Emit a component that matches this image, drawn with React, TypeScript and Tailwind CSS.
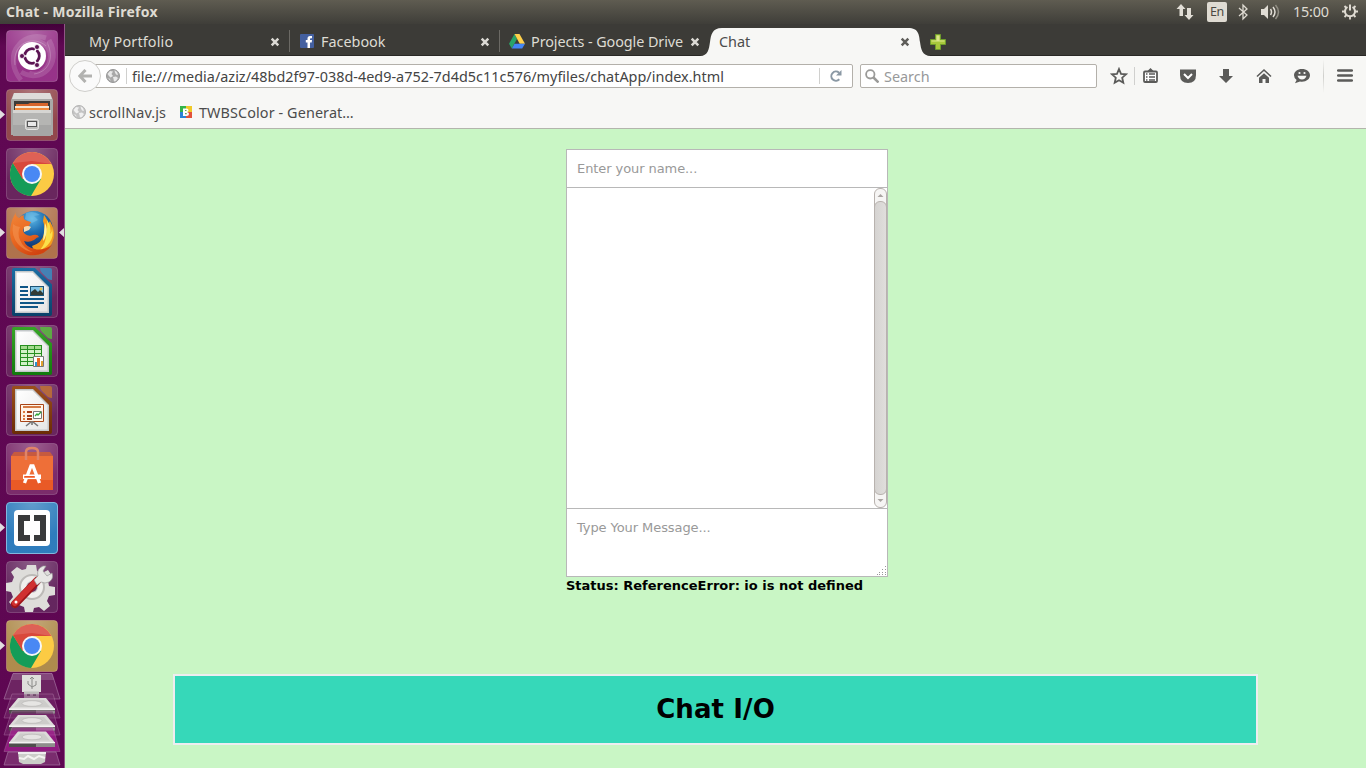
import React from "react";

const ui = "font-['Noto_Sans',sans-serif] whitespace-nowrap";

function Close({ dark = false }: { dark?: boolean }) {
  return (
    <svg width="10" height="10" viewBox="0 0 10 10" className="shrink-0">
      <path d="M1.7 1.7 8.3 8.3M8.3 1.7 1.7 8.3" stroke={dark ? "#5e5d59" : "#dcdad5"} strokeWidth="2.5" />
    </svg>
  );
}

function Globe({ light = false }: { light?: boolean }) {
  return (
    <svg width="14" height="14" viewBox="0 0 14 14" className="shrink-0">
      <circle cx="7" cy="7" r="6.5" fill={light ? "#c4c4c4" : "#a8a8a8"} stroke={light ? "#b4b4b4" : "#969696"} />
      <path d="M1.5 5 4 2l3 .5L5.5 5 7 7l-2.500 1.500L3 7zM8.500 1.200 11 3l1 3-2-.5-1-2zM7 8l3-.5 2 1.500-2 3-2 .5-.5-2.500zM2 9l2 1 .5 2z" fill={light ? "#f0f0f0" : "#e8e8e8"} />
    </svg>
  );
}

function Tile({ bg, border = "#ffffff30", children }: { bg: string; border?: string; children: React.ReactNode }) {
  const id = React.useId();
  return (
    <svg width="52" height="52" viewBox="0 0 52 52" className="block">
      <defs>
        <radialGradient id={id} cx=".5" cy="0" r=".75">
          <stop offset="0" stopColor="#fff" stopOpacity=".3" />
          <stop offset="1" stopColor="#fff" stopOpacity=".07" />
        </radialGradient>
      </defs>
      <rect x=".5" y=".5" width="51" height="51" rx="3.500" fill={bg} />
      <rect x=".5" y=".5" width="51" height="51" rx="3.500" fill={`url(#${id})`} stroke={border} />
      {children}
    </svg>
  );
}

function Chrome() {
  return (
    <g>
      <circle cx="26" cy="26" r="22" fill="#fccb44" />
      <path d="M6.900 15A22 22 0 0 0 25 48L35 31 26 26 17 31z" fill="#159c58" />
      <path d="M6.900 15A22 22 0 0 1 45.500 16H26L16.500 31z" fill="#d9483b" />
      <path d="M6.900 15A22 22 0 0 1 45.500 16L26 13z" fill="#fff" opacity=".14" />
      <circle cx="26" cy="26" r="10" fill="#f7f7f7" />
      <circle cx="26" cy="26" r="8" fill="#4988f4" />
    </g>
  );
}

function Doc({ color, dark, corner, children }: { color: string; dark: string; corner: string; children: React.ReactNode }) {
  const id = React.useId();
  return (
    <g>
      <defs>
        <linearGradient id={id} x1="0" y1="0" x2="0" y2="1"><stop offset="0" stopColor={color} /><stop offset="1" stopColor={dark} /></linearGradient>
        <linearGradient id={`${id}p`} x1="0" y1="0" x2="1" y2="1"><stop offset="0" stopColor="#fff" /><stop offset="1" stopColor="#e6e6e6" /></linearGradient>
      </defs>
      <path d="M6 4q0-2 2-2H29L46 18.500V48q0 2-2 2H8q-2 0-2-2z" fill={`url(#${id})`} />
      <path d="M9 5H27L43 21V47H9z" fill="#c4c8ca" />
      <path d="M10.500 6.500H26.500L41.500 21.500V45.500H10.500z" fill={`url(#${id}p)`} />
      <path d="M34 2H44q2 0 2 2V14q-4 0-6-3L36 7q-2-2-2-5z" fill={corner} opacity=".85" />
      {children}
    </g>
  );
}

function LauncherTiles() {
  return (
    <>
      <Tile bg="#8f2480">
        <path d="M8 34C3 10 31 3 42 18 50 29 38 49 23 43M15 50C-4 27 15 0 40 8M43 10C57 35 34 54 15 42" fill="none" stroke="#fff" strokeWidth="5" opacity=".14" />
        <path d="M9 35C6 12 28 5 40 16M41 12C49 29 42 42 28 44" fill="none" stroke="#fff" opacity=".22" />
        <circle cx="26" cy="26" r="14" fill="#fff" />
        <circle cx="26" cy="26" r="7.300" fill="none" stroke="#5b1453" strokeWidth="2.800" />
        <path d="M26 26H12M26 26l7-12M26 26l7 12" stroke="#fff" strokeWidth="1.500" />
        <circle cx="26" cy="26" r="5.300" fill="#fff" />
        <g fill="#5b1453" stroke="#fff" strokeWidth=".8"><circle cx="16" cy="26" r="2.500" /><circle cx="31" cy="17" r="2.500" /><circle cx="31" cy="35" r="2.500" /></g>
      </Tile>
      <Tile bg="#8a3a3f">
        <path d="M8 4H44L47 11V46H5V11z" fill="#a9a9a7" />
        <path d="M8 4H44L46 10H6z" fill="#deddda" />
        <path d="M8 12H44V22H8z" fill="#3d3b38" />
        <path d="M10 15h12l2-1h18v8H10z" fill="#d7652b" />
        <path d="M9 17h34v2H9z" fill="#f6e8d5" /><path d="M9 19h34v3H9z" fill="#f08b3d" />
        <path d="M7 21H45V47H7z" fill="#b5b5b3" /><path d="M7 21H45V24H7z" fill="#d6d5d2" />
        <path d="M7 36H45V47H7z" fill="#9d9d9b" opacity=".6" />
        <rect x="19.500" y="30.500" width="13" height="10" rx="2" fill="#bebebc" stroke="#e8e8e6" />
        <rect x="21.500" y="32.500" width="9" height="5" fill="#e9e9e9" stroke="#555" />
      </Tile>
      <Tile bg="#5e1652"><Chrome /></Tile>
      <Tile bg="#a9683f">
        <defs>
          <radialGradient id="sea" cx=".45" cy=".2" r=".7"><stop offset="0" stopColor="#5fb9e6" /><stop offset=".5" stopColor="#1f6fb2" /><stop offset="1" stopColor="#123c78" /></radialGradient>
          <linearGradient id="fur" x1="0" y1="0" x2=".6" y2="1"><stop offset="0" stopColor="#f0873a" /><stop offset=".5" stopColor="#ea6a22" /><stop offset="1" stopColor="#d24310" /></linearGradient>
        </defs>
        <circle cx="28" cy="23" r="19" fill="url(#sea)" />
        <path d="M20 6q8-3 14 2l-6 1 4 4-6 3-7-4z" fill="#7cc4ea" opacity=".5" />
        <path d="M38 8q4 5 4 9l2-3q7 12 2 22-5 10-16 12l-4-9q10-3 12-12 1-8-1-13z" fill="#f39a1c" />
        <path d="M41 13q5 7 3 14 2-2 2-6 2 8-2 14-4 6-10 8 6-7 6-15 2-8 1-15z" fill="#fbe04a" />
        <path d="M39 16q3 6 1 12-1 4-3 6 1-9 2-18z" fill="#fff3a0" />
        <path d="M9 7q-5 9-5 19 1 17 18 22 16 2 24-10-10 6-17 4-9-2-11-8 5 2 10-1 3-3 5-3-1-3-6-2-4 2-8-1-3-3-1-6l5-2 2-4q-4-1-6-2-2-2-1-5-4 1-5 3-3-1-4-6z" fill="url(#fur)" />
        <path d="M18 20q4-2 7 0l-2 3-5 2z" fill="#f8d9ad" />
        <path d="M7 17q-2 12 5 20 6 7 15 8-10-4-13-12-3-7 0-13-4 0-7-3z" fill="#f39250" opacity=".6" />
      </Tile>
      <Tile bg="#5e1652">
        <Doc color="#1a6da3" dark="#0a4169" corner="#3a8cbf">
          <path d="M14 20h8v2h-8zM14 24h8v2h-8zM14 28h8v2h-8zM14 32h24v2H14zM14 36h24v2H14zM14 40h18v2H14z" fill="#0f5687" />
          <path d="M24 20h14v10H24z" fill="#1c5477" /><path d="M25 21h12v8H25z" fill="#82c5e8" /><path d="M25 29v-3l4-3 3 3 2-2 3 3v2z" fill="#333b35" /><circle cx="35" cy="23" r="1.400" fill="#ecc54c" />
        </Doc>
      </Tile>
      <Tile bg="#5e1652">
        <Doc color="#37a526" dark="#117a0d" corner="#58bd3d">
          <path d="M14 20h22v21H14z" fill="#278f20" />
          <path d="M15 21h6v3h-6zM22 21h6v3h-6zM29 21h6v3h-6z" fill="#a4db8f" />
          <path d="M15 25h6v3h-6zM22 25h6v3h-6zM29 25h6v3h-6zM15 29h6v3h-6zM22 29h6v3h-6zM29 29h6v3h-6zM15 33h6v3h-6zM22 33h6v3h-6zM15 37h6v3h-6zM22 37h6v3h-6z" fill="#d3f1c7" />
          <path d="M27.500 31.500h10v10h-10z" fill="#fff" stroke="#777" /><path d="M29 37h2v4h-2z" fill="#2d95d0" /><path d="M31 33h3v8h-3z" fill="#e66925" /><path d="M35 36h2v5h-2z" fill="#e1a12c" />
        </Doc>
      </Tile>
      <Tile bg="#5e1652">
        <Doc color="#9c4f1c" dark="#6b2c06" corner="#bf7133">
          <path d="M14.500 20.500h23v17h-23z" fill="#fff4e8" stroke="#a94416" /><path d="M17 22h18v2H17z" fill="#d47a45" />
          <path d="M17 27h2v2h-2zM17 31h2v2h-2zM17 34h2v2h-2z" fill="#dd7b3f" /><path d="M21 27h5v2h-5zM21 31h5v2h-5zM21 34h5v2h-5z" fill="#a53f18" />
          <path d="M27.500 27.500h8v7h-8z" fill="#fff" stroke="#777" /><path d="m29 32 2-2 1 1 3-3" fill="none" stroke="#30a637" strokeWidth="1.300" />
          <path d="m20 42 5-4h2l5 4M26 38v3" fill="none" stroke="#777" strokeWidth="1.600" />
        </Doc>
      </Tile>
      <Tile bg="#711c60">
        <path d="M8 9H44L47 13H5z" fill="#c65a3f" />
        <path d="M5 13H47V47H5z" fill="#ee6f38" />
        <path d="M5 37H47V47H5z" fill="#e95a26" />
        <path d="M20 17V9q0-4 6-4t6 4v8" fill="none" stroke="#e08468" strokeWidth="2.500" />
        <path d="M18.500 40 25 23h2l6.500 17" fill="none" stroke="#fff" strokeWidth="3.300" />
        <path d="M17 31.500H35V36H17z" fill="#fff" />
        <rect x="18" y="33" width="11" height="1.800" rx=".9" fill="#ef5a24" />
      </Tile>
      <Tile bg="#1f73b8" border="#82b7df">
        <rect x="8" y="8" width="36" height="36" rx="4" fill="#fff" />
        <path d="M12 13H24V19H18V33H24V39H12zM28 13H40V39H28V33H34V19H28z" fill="#393a3b" />
      </Tile>
      <Tile bg="#591653">
        <path d="m21 4 9 0 1 6 5 2 6-3 4 6-4 5 1 5 6 1v8l-6 1-2 5 3 5-6 5-5-4-5 1-1 4h-8l-1-5-5-2-5 3-5-6 4-5-2-5-5-1v-8l6-1 2-5-3-5 6-5 5 3 4-1z" fill="#deddda" />
        <circle cx="26" cy="26" r="12" fill="#f0efed" stroke="#bcbab7" strokeWidth="2" />
        <circle cx="26" cy="26" r="6" fill="#c9c7c4" />
        <circle cx="26" cy="26" r="5" fill="#6d2a62" />
        <path d="m9 43 22-23" stroke="#9e1418" strokeWidth="8" strokeLinecap="round" />
        <path d="m9 42 22-23" stroke="#d03030" strokeWidth="6" strokeLinecap="round" />
        <path d="m28 19 4-4q-2-7 5-10l3 0-3 5 4 5 5-3q2 6-3 9-4 2-8 0l-4 3z" fill="#e8e7e5" stroke="#999" strokeWidth=".7" />
        <circle cx="10" cy="41" r="1.500" fill="#fff" />
      </Tile>
      <Tile bg="#a98340" border="#ffe1a750"><Chrome /></Tile>
    </>
  );
}

function Drive({ y, tint }: { y: number; tint: string }) {
  return (
    <g transform={`translate(0 ${y})`}>
      <path d="M12-4H53L60 20H4z" fill={tint} opacity=".5" stroke="#d5a7cf" strokeWidth=".6" />
      <path d="M18 0H46L55 11H9z" fill="#dcdbd9" />
      <path d="M20 2H44L50 9H14z" fill="#cdccca" /><ellipse cx="32" cy="5.500" rx="10" ry="2.800" fill="#e6e5e3" stroke="#b5b4b2" strokeWidth=".6" />
      <path d="M9 11H55V15.500H9z" fill="#4f4e4c" /><path d="M9 10.500H55V12H9z" fill="#f3f2f1" /><path d="M36 12.500H55V15.500H36z" fill="#8e8d8b" />
    </g>
  );
}

function Launcher() {
  return (
    <aside className="relative flex w-[65px] shrink-0 flex-col overflow-hidden border-r border-[#915586] bg-gradient-to-b from-[#43003a] via-[#600853] via-[3%] to-[#5e0752] pt-[6px]">
      <div className="flex flex-col gap-[7px] pl-[6px]"><LauncherTiles /></div>
      <svg width="64" height="96" viewBox="0 0 64 96" className="block shrink-0">
        <path d="M13 1.500H52L60 27H4z" fill="#6d2462" stroke="#a573a0" strokeWidth=".7" />
        <path d="M13 1.500H52L54 8H11z" fill="#fff" opacity=".16" />
        <path d="M22 3H41V20H22z" fill="#dededb" /><path d="M24 19.500h15v6.500H24z" fill="#bcbcba" /><path d="M27 22h3v2h-3zM33 22h3v2h-3z" fill="#666" />
        <path d="M32 6v11M28 9v3l4 3 4-2V9M30 7l2-2 2 2" stroke="#8a8a88" fill="none" />
        <Drive y={26} tint="#7a3170" /><Drive y={43} tint="#7a3170" /><Drive y={59.500} tint="#c42fae" />
        <path d="M8 80 4 93H60L56 80z" fill="#7a2c6e" stroke="#a573a0" strokeWidth=".7" />
        <path d="m18 80 28 0-1 10-4 2-18 0-4-2z" fill="#cccdc9" /><path d="m19 86 5 1 4-3 6 3 5-3 6 2" stroke="#f4f4f1" fill="none" strokeWidth="2" />
        <path d="M18 81H46" stroke="#eee" strokeWidth="2" />
      </svg>
      <svg className="absolute inset-0" width="64" height="744" viewBox="0 24 64 744" fill="#e1dde0">
        <path d="M0 110v9l5-4.500zM0 228v9l5-4.500zM64 228v9l-5-4.500zM0 523v9l5-4.500zM0 641v9l5-4.500z" />
      </svg>
    </aside>
  );
}

function TopBar() {
  return (
    <header className="flex h-6 shrink-0 items-center bg-gradient-to-b from-[#5f5c51] to-[#3f3e39] pl-[6px] text-[#dfdbd2]">
      <span className={`${ui} w-[160px] pb-[2px] text-[14px] font-bold tracking-[0.28px]`}>Chat - Mozilla Firefox</span>
      <div className="ml-auto flex w-[190px] items-center">
        <svg width="18" height="18" viewBox="0 0 18 18" fill="#e1ddd5"><path d="M5 1 9.500 6H7V13H3.500V6H.5zM13 17l4.500-5H15V5h-4v7H8.500z" /></svg>
        <span className="ml-[13px] flex h-5 w-5 items-center justify-center rounded-[2px] bg-[#dfdbd2] pt-[1px] font-['Noto_Sans',sans-serif] text-[12.5px] tracking-[-0.3px] text-[#4b4943]">En</span>
        <svg className="ml-[10px]" width="12" height="18" viewBox="0 0 12 18" fill="none" stroke="#dfdbd2" strokeWidth="1.300"><path d="m2 5 8 7-4 4V2l4 4-8 7" /></svg>
        <svg className="ml-[11px]" width="20" height="18" viewBox="0 0 20 18"><path d="M1 6h3l4-4v14l-4-4H1z" fill="#e1ddd5" /><path d="M10.500 6q2 3 0 6M13 4q4 5 0 10" fill="none" stroke="#e1ddd5" strokeWidth="1.500" /><path d="M15.500 2q6 7 0 14" fill="none" stroke="#918e84" strokeWidth="1.500" /></svg>
        <span className={`${ui} ml-[13px] w-[37px] text-[14.4px] tracking-[-0.2px]`}>15:00</span>
        <svg className="ml-[12px]" width="16" height="17" viewBox="0 0 16 17" fill="none" stroke="#dfdbd2"><path d="M5.500 4a5 5 0 1 0 5 0M8 1.500v6" strokeWidth="2" /><path d="M8 13.500v3M3 8.500H0M16 8.500h-3M4.500 12l-2 2M11.500 12l2 2M4.500 5l-2-2M11.500 5l2-2" strokeWidth="1.800" /></svg>
      </div>
    </header>
  );
}

function Tabs() {
  const t = `${ui} pt-[2px] text-[14.4px] text-[#dedbd4]`;
  return (
    <div className="flex h-8 shrink-0 border-b border-[#292825] bg-[#3c3b37]">
      <div className="flex w-[225px] items-center pb-[1px] pl-[24px] pt-[4px]">
        <span className={`${t} tracking-[0.15px]`}>My Portfolio</span>
        <span className="ml-auto mr-[9px] flex pt-[1px]"><Close /></span>
        <i className="h-[22px] w-px bg-[#6b6964]" />
      </div>
      <div className="flex w-[210px] items-center pb-[1px] pl-[10px] pt-[4px]">
        <svg width="14" height="14" viewBox="0 0 14 14"><rect width="14" height="14" rx="1" fill="#4460a0" /><path d="M7.500 14V8.500H5.800V6H7.500V4.500Q7.500 2 10 2h2v2.200h-1.200Q10 4.200 10 5v1h2l-.3 2.500H10V14z" fill="#fff" /></svg>
        <span className={`${t} ml-[7px]`}>Facebook</span>
        <span className="ml-auto mr-[9px] flex pt-[1px]"><Close /></span>
        <i className="h-[22px] w-px bg-[#6b6964]" />
      </div>
      <div className="flex w-[200px] items-center pb-[1px] pl-[9px] pt-[4px]">
        <svg width="16" height="15" viewBox="0 0 16 15"><path d="M5.500 0 0 9.800 2.800 14.500 8 5z" fill="#29a368" /><path d="M5.500 0h5L16 9.800h-5.300z" fill="#ffd04b" /><path d="M5.500 9.800H16L13.200 14.500H2.800z" fill="#4385f5" /></svg>
        <span className={`${t} ml-[6px] tracking-[-0.08px]`}>Projects - Google Drive</span>
        <span className="ml-auto flex pt-[1px]"><Close /></span>
      </div>
      <div className="relative -mb-px flex w-[232px] items-center pb-[1px] pl-[19px] pt-[4px]">
        <svg className="absolute left-0 top-[4px]" width="232" height="28" viewBox="0 0 232 28">
          <path d="M0 28C8 28 9 21 10 14S12 0 22 0H208C219 0 219 7 220 14S222 28 231 28z" fill="#f7f7f5" />
        </svg>
        <span className={`${ui} relative text-[14.4px] text-[#4c4c4c]`}>Chat</span>
        <span className="relative ml-auto mr-[22px] flex"><Close dark /></span>
      </div>
      <svg className="-ml-[2px] mt-[10px]" width="16" height="16" viewBox="0 0 16 16"><path d="M5.500.5h5v5h5v5h-5v5h-5v-5h-5v-5h5z" fill="#a9c83c" stroke="#6f9c2c" /><path d="M6.500 1.500h3v5h5v1H1.500v-1h5z" fill="#dbe58c" /></svg>
    </div>
  );
}

const g = "#5b5b59";

function NavBar() {
  return (
    <div className="flex h-10 shrink-0 items-center bg-[#f7f7f5] pl-[4px]">
      <div className="z-10 flex h-8 w-8 shrink-0 items-center justify-center rounded-full border border-[#cfcecb] bg-[#fafafa]">
        <svg width="14" height="14" viewBox="0 0 14 14"><path d="M7.500 1 1.800 7l5.700 6M2 7H14" fill="none" stroke="#b2b2b0" strokeWidth="3" /></svg>
      </div>
      <div className="-ml-[9px] flex h-6 w-[761px] items-center rounded-[2px] border border-[#b3b0aa] bg-white pl-[13px]">
        <Globe />
        <i className="ml-[6px] h-4 w-px bg-[#d0d0ce]" />
        <span className={`${ui} ml-[5px] w-[687px] pt-[2px] text-[14.4px] leading-5 tracking-[0.02px] text-[#444]`}>file:///media/aziz/48bd2f97-038d-4ed9-a752-7d4d5c11c576/myfiles/chatApp/index.html</span>
        <i className="h-4 w-px bg-[#d0d0ce]" />
        <svg className="ml-[9px]" width="14" height="14" viewBox="0 0 14 14"><path d="M10.300 10.300A4.600 4.600 0 1 1 10 3.700" fill="none" stroke="#8a98a4" strokeWidth="2" /><path d="M12.500 1v5.500H7z" fill="#8a98a4" /></svg>
      </div>
      <div className="ml-[7px] flex h-6 w-[237px] items-center rounded-[2px] border border-[#b3b0aa] bg-white pl-[4px]">
        <svg width="14" height="14" viewBox="0 0 14 14" fill="none" stroke="#9a9a98"><circle cx="5.300" cy="5.300" r="4.200" strokeWidth="1.800" /><path d="m8.500 8.500 5 5" strokeWidth="2.500" /></svg>
        <span className={`${ui} ml-[5px] pt-[2px] text-[14.4px] leading-5 text-[#98999a]`}>Search</span>
      </div>
      <svg className="ml-[13px]" width="18" height="18" viewBox="0 0 18 18"><path d="m9 2 2 4.800 5 .5-3.800 3.400 1.100 5L9 13.200l-4.300 2.500 1.100-5L2 7.300l5-.5z" fill="none" stroke={g} strokeWidth="1.800" /></svg>
      <i className="ml-[6px] h-[18px] w-px bg-[#d0d0ce]" />
      <svg className="ml-[8px]" width="15" height="16" viewBox="0 0 15 16"><path d="M4 3.500 7.500 0 11 3.500z" fill={g} /><rect x="1" y="3.500" width="13" height="10.500" rx="1" fill="#fff" stroke={g} strokeWidth="1.800" /><path d="M3 6h1.500M6 6h6M3 9h1.500M6 9h6M3 12h1.500M6 12h6" stroke={g} strokeWidth="1.300" /></svg>
      <svg className="ml-[22px]" width="16" height="16" viewBox="0 0 16 16"><path d="M0 1.500H16V7q0 8-8 8T0 7z" fill={g} /><path d="m4 6 4 4 4-4" fill="none" stroke="#fff" strokeWidth="2" /></svg>
      <svg className="ml-[23px]" width="14" height="16" viewBox="0 0 14 16"><path d="M4 1h6v7h4l-7 7-7-7h4z" fill={g} /></svg>
      <svg className="ml-[23px]" width="16" height="16" viewBox="0 0 16 16"><path d="m1 8.500 7-6.500 7 6.500" fill="none" stroke={g} strokeWidth="1.600" /><path d="m3 9.800 5-4.500 5 4.500V15H9.500v-4h-3v4H3z" fill={g} /></svg>
      <svg className="ml-[22px]" width="16" height="16" viewBox="0 0 16 16"><path d="M8 1c4.500 0 8 2.600 8 6.300s-3.500 6.400-8 6.400q-1 0-2-.2L1 15.300l1.600-3.300Q0 10.200 0 7.300C0 3.600 3.500 1 8 1z" fill={g} /><path d="M3.500 7.800h9Q11.500 11.500 8 11.500T3.500 7.800z" fill="#f7f7f5" /><circle cx="5.500" cy="5" r="1.100" fill="#f7f7f5" /><circle cx="10.500" cy="5" r="1.100" fill="#f7f7f5" /></svg>
      <i className="ml-[13px] h-[34px] w-px bg-gradient-to-b from-transparent via-[#cfcfcc] to-transparent" />
      <svg className="ml-[13px]" width="16" height="14" viewBox="0 0 16 14"><path d="M1.200 1.500h13.600M1.200 6.500h13.600M1.200 11.500h13.600" stroke={g} strokeWidth="2.500" strokeLinecap="round" /></svg>
    </div>
  );
}

function Bookmarks() {
  return (
    <div className="flex h-[33px] shrink-0 items-center border-b border-[#b3b5ac] bg-[#f7f7f5] pl-[7px]">
      <Globe light />
      <span className={`${ui} ml-[3px] w-[91px] pt-[2px] text-[14.4px] tracking-[0.1px] text-[#4c4c4c]`}>scrollNav.js</span>
      <svg width="12" height="12" viewBox="0 0 12 12"><path d="M0 0h6v6H0z" fill="#32b44a" /><path d="M6 0h6v6H6z" fill="#f0c928" /><path d="M0 6h6v6H0z" fill="#2c83d6" /><path d="M6 6h6v6H6z" fill="#e2523b" /><path d="M3 2.500h3.500q2 0 2 1.700Q8.500 5.500 7 6q2 .3 2 2 0 2-2.500 2H3z" fill="#fff" /><path d="M5 4h1.500v1H5zM5 7h1.700v1.300H5z" fill="#65a35a" /></svg>
      <span className={`${ui} ml-[7px] pt-[2px] text-[14.4px] tracking-[0.1px] text-[#4c4c4c]`}>TWBSColor - Generat…</span>
    </div>
  );
}

function ScrollBar() {
  return (
    <div className="flex h-[320px] w-[13px] shrink-0 flex-col items-center justify-between rounded-[6px] border border-[#b8b2ae] bg-[#f6f5f4]">
      <svg width="7" height="12" viewBox="0 0 7 12"><path d="m.5 8 3-3 3 3z" fill="#aaa5a2" /></svg>
      <div className="-mx-px w-[13px] flex-1 rounded-[6px] border border-[#b8b2ae] bg-gradient-to-r from-[#d5d3d1] to-[#e0dedc]" />
      <svg width="7" height="12" viewBox="0 0 7 12"><path d="m.5 4 3 3 3-3z" fill="#aaa5a2" /></svg>
    </div>
  );
}

function ChatPage() {
  return (
    <main className="flex flex-1 flex-col bg-[#c9f6c5] pt-[20px] font-['DejaVu_Sans',sans-serif]">
      <section className="ml-[501px] w-[322px] text-[13px]">
        <div className="border border-[#b8b8b8] bg-white tracking-[-0.08px] text-[#999]">
          <div className="flex h-[38px] items-center border-b border-[#b8b8b8] pl-[10px]">Enter your name...</div>
          <div className="flex h-[321px] justify-end border-b border-[#b8b8b8]"><ScrollBar /></div>
          <div className="flex h-[67px] justify-between pl-[10px] pt-[10px] leading-[17px]">
            <span>Type Your Message...</span>
            <svg className="self-end" width="10" height="10" viewBox="0 0 10 10"><path d="M8 0h1v1H8zM8 3h1v1H8zM5 3h1v1H5zM8 6h1v1H8zM5 6h1v1H5zM2 6h1v1H2zM8 8h1v1H8zM5 8h1v1H5zM2 8h1v1H2zM0 8h1v1H0z" fill="#989898" /></svg>
          </div>
        </div>
        <p className="whitespace-nowrap font-bold leading-[18px] text-black">Status: ReferenceError: io is not defined</p>
      </section>
      <footer className="ml-[108px] mt-[79px] flex h-[71px] w-[1085px] items-center justify-center border-2 border-[#eeedf0] bg-[#36d8b9] text-[26px] font-bold tracking-[0.1px] text-black">
        Chat I/O
      </footer>
    </main>
  );
}

export default function App() {
  return (
    <div className="flex h-[768px] w-[1366px] flex-col overflow-hidden">
      <TopBar />
      <div className="flex min-h-0 flex-1">
        <Launcher />
        <div className="flex min-w-0 flex-1 flex-col">
          <Tabs />
          <NavBar />
          <Bookmarks />
          <ChatPage />
        </div>
      </div>
    </div>
  );
}
